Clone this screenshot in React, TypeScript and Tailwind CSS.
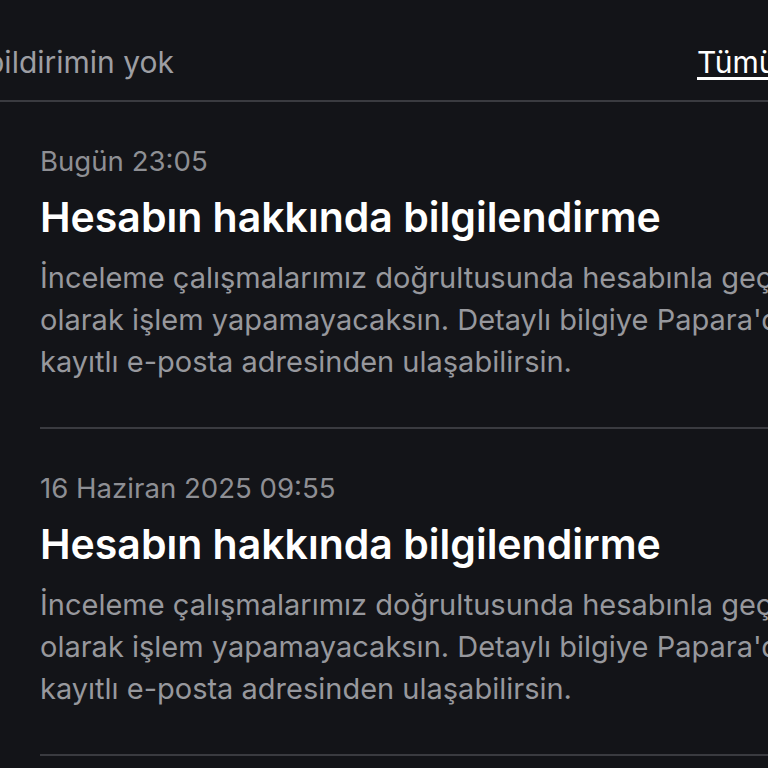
const notifications = [
  { id: 1, date: 'Bugün 23:05' },
  { id: 2, date: '16 Haziran 2025 09:55' },
]

const NotificationCard = ({ date }: { date: string }) => {
  return (
    <div className="ml-10 border-b-2 border-[#3a3b40] pt-[42px] pb-[44px]">
      <p className="whitespace-nowrap text-[27.6px] leading-[34px] text-[#8e8f94]">{date}</p>
      <h2 className="mt-[15px] whitespace-nowrap text-[41px] font-semibold leading-[48px] text-white">
        Hesabın hakkında bilgilendirme
      </h2>
      <p className="mt-4 whitespace-nowrap text-[29px] leading-[42px] text-[#97989d]">
        İnceleme çalışmalarımız doğrultusunda hesabınla geçici
        <br />
        olarak işlem yapamayacaksın. Detaylı bilgiye Papara&apos;da
        <br />
        kayıtlı e-posta adresinden ulaşabilirsin.
      </p>
    </div>
  )
}

export default function App() {
  return (
    <div className="h-[768px] w-[768px] overflow-hidden bg-[#131418] font-['Inter',sans-serif]">
      <div className="flex h-[102px] items-start border-b-2 border-[#3a3b40] pt-[43px]">
        <div className="flex w-[174px] shrink-0 justify-end whitespace-nowrap text-[30px] leading-[38px] text-[#9d9ea3]">
          Okunmamış bildirimin yok
        </div>
        <a className="ml-[523px] shrink-0 whitespace-nowrap text-[30px] leading-[38px] text-white underline underline-offset-4">
          Tümünü okundu işaretle
        </a>
      </div>
      {notifications.map((n) => (
        <NotificationCard key={n.id} date={n.date} />
      ))}
    </div>
  )
}
